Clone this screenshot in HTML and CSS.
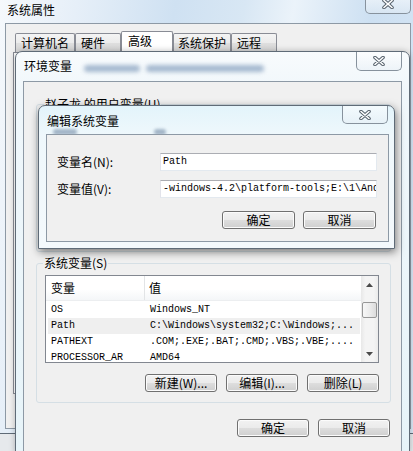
FILE: index.html
```html
<!DOCTYPE html>
<html lang="zh-CN">
<head>
<meta charset="utf-8">
<title>环境变量</title>
<link rel="stylesheet" href="styles.css">
</head>
<body>
<div class="win win-sys">
  <div class="titlebar">
    <span class="title">系统属性</span>
    <span class="close"><svg width="12" height="10" viewBox="0 0 12 10"><path d="M2 1.5L10 8.5M10 1.5L2 8.5" stroke="#56616c" stroke-width="3.6" stroke-linecap="round"/><path d="M2 1.5L10 8.5M10 1.5L2 8.5" stroke="#fff" stroke-width="1.6" stroke-linecap="round"/></svg></span>
  </div>
  <div class="client sys-client">
    <div class="tabs">
      <span class="tab t1">计算机名</span>
      <span class="tab t2">硬件</span>
      <span class="tab t3 sel">高级</span>
      <span class="tab t4">系统保护</span>
      <span class="tab t5">远程</span>
    </div>
    <div class="tabpanel"></div>
  </div>
</div>

<div class="win win-env">
  <div class="titlebar">
    <span class="title">环境变量</span>
    <span class="ghost-title" aria-hidden="true"><i class="blob b1"></i><i class="blob b2"></i></span>
    <span class="close"><svg width="12" height="10" viewBox="0 0 12 10"><path d="M2 1.5L10 8.5M10 1.5L2 8.5" stroke="#56616c" stroke-width="3.6" stroke-linecap="round"/><path d="M2 1.5L10 8.5M10 1.5L2 8.5" stroke="#fff" stroke-width="1.6" stroke-linecap="round"/></svg></span>
  </div>
  <div class="client env-client">
    <fieldset class="group group-user">
      <legend>赵子龙 的用户变量(U)</legend>
      <div class="group-user-body"></div>
    </fieldset>
    <fieldset class="group group-sys">
      <legend>系统变量(S)</legend>
      <div class="lv">
        <div class="lv-main">
          <div class="lv-head"><span>变量</span><span>值</span></div>
          <div class="lv-row mono"><span>OS</span><span>Windows_NT</span></div>
          <div class="lv-row mono hl"><span>Path</span><span>C:\Windows\system32;C:\Windows;...</span></div>
          <div class="lv-row mono"><span>PATHEXT</span><span>.COM;.EXE;.BAT;.CMD;.VBS;.VBE;....</span></div>
          <div class="lv-row mono"><span>PROCESSOR_AR</span><span>AMD64</span></div>
        </div>
        <div class="vscroll">
          <span class="sb-btn"><svg width="7" height="4" viewBox="0 0 7 4"><polygon points="3.5,0 7,4 0,4" fill="#4a4a4a"/></svg></span>
          <span class="sb-track"><span class="sb-thumb"></span></span>
          <span class="sb-btn"><svg width="7" height="4" viewBox="0 0 7 4"><polygon points="0,0 7,0 3.5,4" fill="#4a4a4a"/></svg></span>
        </div>
      </div>
      <div class="btn-row">
        <button class="btn">新建(W)...</button>
        <button class="btn">编辑(I)...</button>
        <button class="btn">删除(L)</button>
      </div>
    </fieldset>
    <div class="btn-row footer">
      <button class="btn">确定</button>
      <button class="btn">取消</button>
    </div>
  </div>
</div>

<div class="win win-edit">
  <div class="titlebar">
    <span class="title">编辑系统变量</span>
    <i class="ghost g1" aria-hidden="true"></i>
    <i class="ghost g2" aria-hidden="true"></i>
    <span class="close"><svg width="12" height="10" viewBox="0 0 12 10"><path d="M2 1.5L10 8.5M10 1.5L2 8.5" stroke="#56616c" stroke-width="3.6" stroke-linecap="round"/><path d="M2 1.5L10 8.5M10 1.5L2 8.5" stroke="#fff" stroke-width="1.6" stroke-linecap="round"/></svg></span>
  </div>
  <div class="client edit-client">
    <div class="edit-form">
      <label class="lbl">变量名(N):</label>
      <div class="field mono">Path</div>
      <label class="lbl">变量值(V):</label>
      <div class="field mono">-windows-4.2\platform-tools;E:\1\And</div>
    </div>
    <div class="btn-row edit-btns">
      <button class="btn">确定</button>
      <button class="btn">取消</button>
    </div>
  </div>
</div>
</body>
</html>
```

FILE: styles.css
```css
* { box-sizing: border-box; }
html, body { margin: 0; padding: 0; }
body {
  position: relative;
  width: 413px;
  height: 451px;
  overflow: hidden;
  background: #e6e9ec;
  font-family: "Noto Sans CJK SC", "Noto Sans", sans-serif;
  font-size: 12px;
  color: #000;
}
.mono { font-family: "Liberation Mono", "DejaVu Sans Mono", monospace; font-size: 10px; }

/* windows */
.win {
  position: absolute;
  display: flex;
  flex-direction: column;
  border: 1px solid #5f6b77;
  border-radius: 7px 7px 0 0;
}
.titlebar {
  position: relative;
  display: flex;
  align-items: flex-start;
  flex: none;
  overflow: hidden;
}
.title { line-height: 16px; white-space: nowrap; }
.close {
  position: relative;
  z-index: 1;
  margin-left: auto;
  width: 46px;
  display: flex;
  align-items: center;
  justify-content: center;
  border: 1px solid #87929d;
  border-top: 0;
  border-radius: 0 0 5px 5px;
  background: linear-gradient(rgba(255,255,255,.6), rgba(228,236,243,.45));
}
.client {
  flex: 1;
  min-height: 0;
  border: 1px solid #8d99a5;
  background: #f0f0f0;
}

/* system properties (back window) */
.win-sys {
  left: -2px;
  top: -6px;
  width: 420px;
  height: 440px;
  padding: 0 6px 4px;
  background: linear-gradient(100deg, #f6f9fc 0%, #e6eff8 16%, #cfe1f2 36%, #d8e7f4 50%, #ebf3fa 60%, #cde0f2 76%, #d9e7f5 100%);
}
.win-sys .titlebar { height: 28px; }
.win-sys .title { padding: 7px 0 0 2px; }
.win-sys .close { height: 19px; }

.tabs {
  display: flex;
  align-items: flex-end;
  height: 28px;
  padding-left: 9px;
}
.tab {
  height: 19px;
  padding-left: 5px;
  line-height: 18px;
  white-space: nowrap;
  border: 1px solid #898c95;
  border-bottom: 0;
  border-radius: 2px 2px 0 0;
  background: linear-gradient(#f4f4f4, #ebebeb 50%, #dedede 51%, #d8d8d8);
}
.tab.sel { height: 21px; padding-left: 6px; background: #fff; }
.t1 { width: 60px; }
.t2 { width: 46px; }
.t3 { width: 52px; }
.t4 { width: 58px; padding-left: 4px; }
.t5 { width: 46px; }
.tabpanel {
  height: 342px;
  margin: 0 6px 0 7px;
  border: 1px solid #898c95;
  background: #fff;
}

/* environment variables window */
.win-env {
  left: 15px;
  top: 51px;
  width: 395px;
  height: 402px;
  padding: 0 7px;
  background: linear-gradient(#f8fbfd, #f0f7fb 40px, #e7f4f9);
  box-shadow: 0 0 6px rgba(0,0,0,.25);
}
.win-env .titlebar { height: 29px; }
.win-env .title { padding: 6px 0 0 1px; }
.win-env .close { height: 19px; }
.ghost-title {
  display: flex;
  gap: 6px;
  margin: 13px 0 0 12px;
}
.blob {
  display: block;
  height: 7px;
  border-radius: 4px;
  background: #8aa3c0;
  filter: blur(2px);
  opacity: .75;
}
.b1 { width: 56px; }
.b2 { width: 118px; }

.env-client { padding: 15px 10px 0 12px; }
.group {
  margin: 0;
  min-width: 0;
  border: 1px solid #d5dfe5;
  border-radius: 3px;
}
.group legend {
  padding: 0 1px;
  line-height: 14px;
  font-size: 12px;
  white-space: nowrap;
}
.group-user { padding: 0; }
.group-user legend { margin-left: 7px; }
.group-user-body { height: 140px; }
.group-sys { margin-top: 4px; padding: 5px 11px 10px 8px; }
.group-sys legend { margin-left: -2px; }

.lv {
  display: flex;
  height: 88px;
  border: 1px solid #828790;
  background: #fff;
  overflow: hidden;
}
.lv-main { flex: 1; min-width: 0; }
.lv-head {
  display: grid;
  grid-template-columns: 99px 1fr;
  height: 25px;
  line-height: 24px;
  background: linear-gradient(#fff, #fff 55%, #f4f6f8);
  border-bottom: 1px solid #eceef0;
}
.lv-head span:first-child { padding-left: 5px; border-right: 1px solid #e2e4e6; }
.lv-head span:last-child { padding-left: 4px; }
.lv-row {
  display: grid;
  grid-template-columns: 97px 1fr;
  height: 16px;
  line-height: 16px;
  margin: 0 1px 0 2px;
  white-space: nowrap;
  overflow: hidden;
}
.lv-head + .lv-row { margin-top: 1px; }
.lv-row span:first-child { padding-left: 3px; }
.lv-row span:last-child { padding-left: 5px; }
.lv-row.hl { background: #efefef; }

.vscroll {
  width: 17px;
  flex: none;
  display: flex;
  flex-direction: column;
  background: linear-gradient(90deg, #e8e8e8, #f4f4f4 25%, #f4f4f4 75%, #ebebeb);
}
.sb-btn {
  height: 17px;
  flex: none;
  display: flex;
  align-items: center;
  justify-content: center;
}
.sb-track { flex: 1; padding-top: 9px; }
.sb-thumb {
  display: block;
  height: 16px;
  margin: 0 1px;
  border: 1px solid #979797;
  border-radius: 2px;
  background: linear-gradient(90deg, #f7f7f7, #ececec 50%, #dcdcdc);
}

.btn-row { display: flex; justify-content: flex-end; gap: 9px; }
.group-sys .btn-row { margin-top: 11px; }
.footer { margin: 16px 1px 0 0; }
.btn {
  width: 72px;
  height: 18px;
  padding: 0;
  font-family: "Noto Sans CJK SC", "Noto Sans", sans-serif;
  font-size: 12px;
  line-height: 16px;
  color: #000;
  white-space: nowrap;
  border: 1px solid #707070;
  border-radius: 3px;
  background: linear-gradient(#f2f2f2, #ebebeb 48%, #dddddd 52%, #cfcfcf);
  box-shadow: inset 0 0 0 1px #fbfbfb;
}

/* edit system variable dialog (front) */
.win-edit {
  left: 38px;
  top: 105px;
  width: 357px;
  height: 144px;
  padding: 0 5px 6px 7px;
  background: linear-gradient(#e3f4fb, #eff8fc 30px, #f4f9fc);
  box-shadow: 1px 3px 8px rgba(0,0,0,.5);
}
.win-edit .titlebar { height: 28px; }
.win-edit .title { padding: 7px 0 0 1px; }
.win-edit .close { height: 18px; margin-right: 1px; }
.ghost {
  position: absolute;
  top: 23px;
  height: 6px;
  border-radius: 3px;
  background: #4a6688;
  filter: blur(1.5px);
  opacity: .45;
}
.g1 { left: 7px; width: 24px; }
.g2 { left: 108px; width: 12px; }

.edit-form {
  display: grid;
  grid-template-columns: 103px 217px;
  row-gap: 9px;
  padding: 18px 0 0 10px;
}
.lbl { line-height: 18px; white-space: nowrap; }
.field {
  height: 18px;
  line-height: 16px;
  padding-left: 2px;
  white-space: nowrap;
  overflow: hidden;
  background: #fff;
  border: 1px solid;
  border-color: #abadb3 #e3e9ef #e3e9ef #e2e3ea;
}
.edit-btns { margin-top: 13px; padding-right: 12px; gap: 8px; }
.edit-btns .btn { width: 73px; }
```
